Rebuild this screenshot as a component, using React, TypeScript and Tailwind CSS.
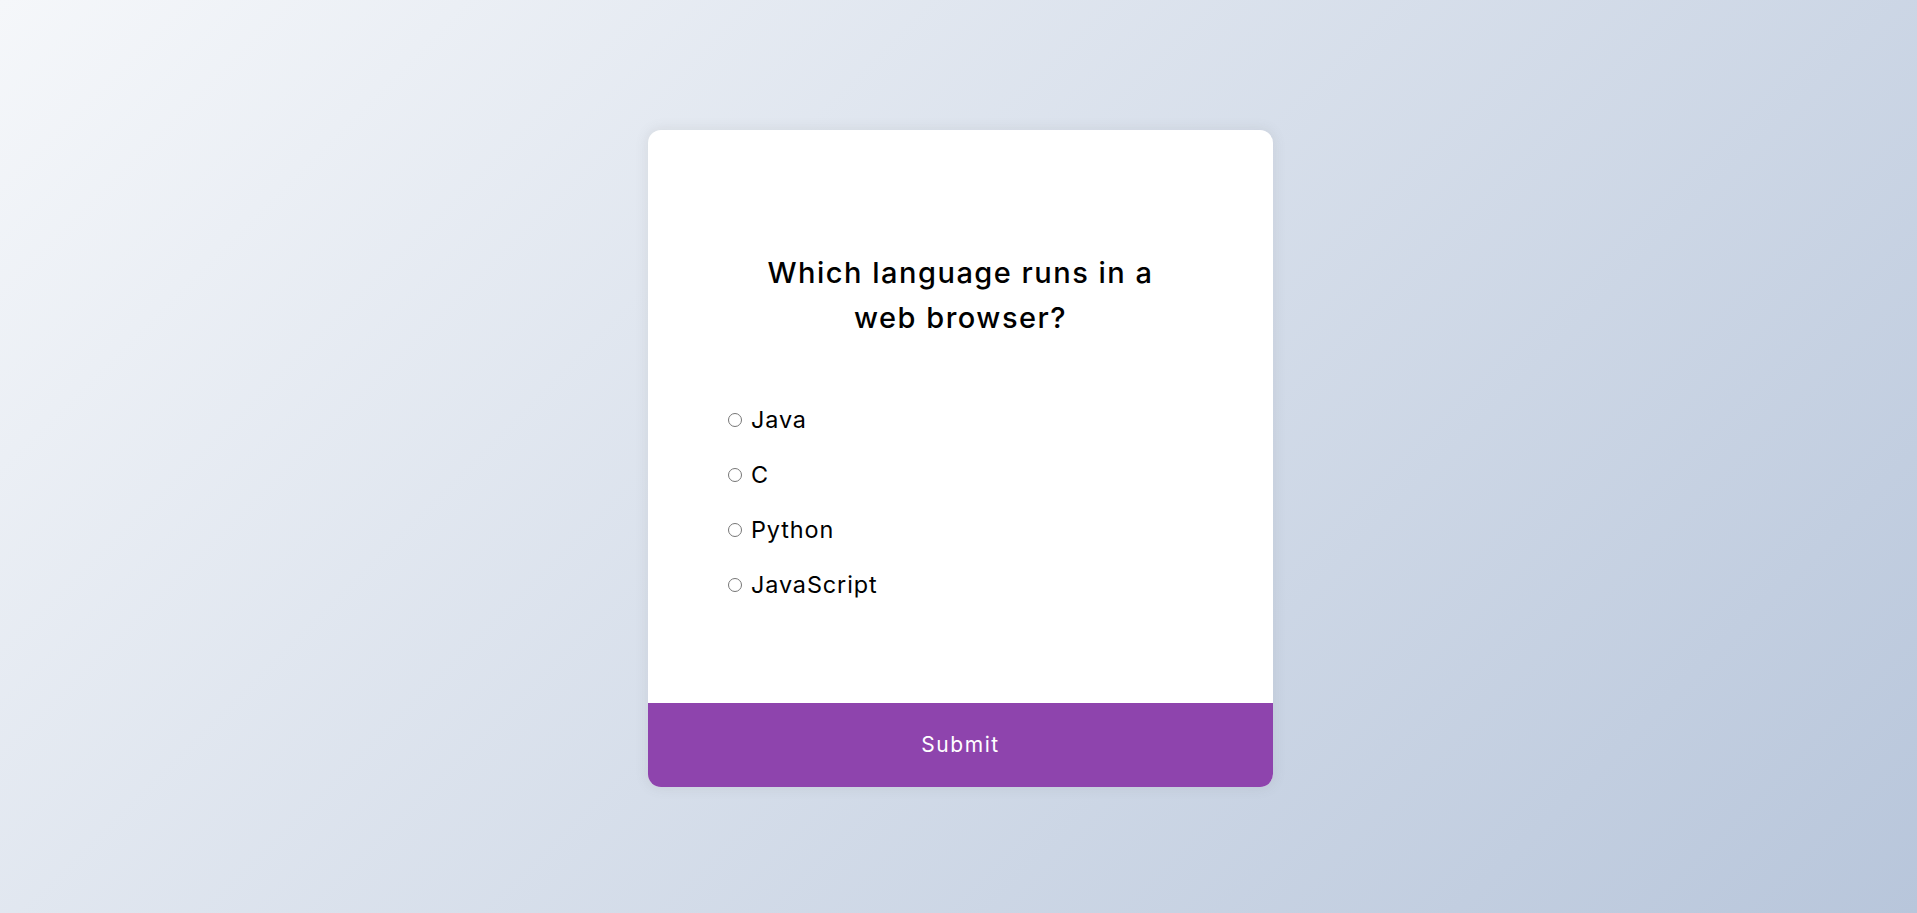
import React from "react";

const options = ["Java", "C", "Python", "JavaScript"];

export default function App() {
  return (
    <div
      className="min-h-screen w-full flex items-center justify-center pt-[4px] pl-[4px] bg-[linear-gradient(315deg,#b8c6db_0%,#f5f7fa_100%)]"
      style={{ fontFamily: "Inter, 'Open Sans', sans-serif" }}
    >
      <div className="w-[625px] h-[657px] bg-white rounded-[13px] overflow-hidden shadow-[0_0_12px_2px_rgba(100,100,100,0.1)] flex flex-col">
        <div className="flex-1 px-[78px] pt-[121px]">
          <h2 className="text-center text-[29px] leading-[44.5px] font-medium text-black tracking-[1.5px]">
            Which language runs in a
            <br />
            web browser?
          </h2>
          <ul className="mt-[62px] flex flex-col gap-[20px]">
            {options.map((o) => (
              <li key={o} className="flex items-center h-[35px] text-[23.4px] leading-[35px] text-black tracking-[0.9px]">
                <input type="radio" name="answer" className="w-[14px] h-[14px] ml-[2px] mr-[9px]" />
                <label>{o}</label>
              </li>
            ))}
          </ul>
        </div>
        <button className="h-[84px] w-full bg-[#8e44ad] text-white text-[21px] tracking-[1.6px] flex items-center justify-center">
          Submit
        </button>
      </div>
    </div>
  );
}
